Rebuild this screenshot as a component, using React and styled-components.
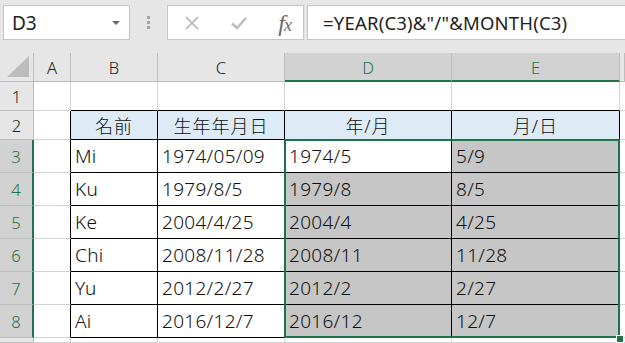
import React from "react";
import styled, { createGlobalStyle } from "styled-components";

const GREEN = "#217346";
const COLS = [34, 37, 87, 127, 167, 168, 5];
const ROWS = [29, 29, 29, 33, 33, 33, 33, 33, 33, 5];
const LETTERS = ["A", "B", "C", "D", "E", ""];

const data = [
  ["Mi", "1974/05/09", "1974/5", "5/9"],
  ["Ku", "1979/8/5", "1979/8", "8/5"],
  ["Ke", "2004/4/25", "2004/4", "4/25"],
  ["Chi", "2008/11/28", "2008/11", "11/28"],
  ["Yu", "2012/2/27", "2012/2", "2/27"],
  ["Ai", "2016/12/7", "2016/12", "12/7"],
];

const App = () => {
  const rows = [];
  // row 1: empty, bottom of B..E is the table's top border
  rows.push(
    <React.Fragment key="r1">
      <RowHead>1</RowHead>
      <Cell />
      <Cell $bottom />
      <Cell $bottom />
      <Cell $bottom />
      <Cell $bottom />
      <Cell />
    </React.Fragment>
  );
  rows.push(
    <React.Fragment key="r2">
      <RowHead>2</RowHead>
      <Cell $right />
      <Cell $table $head>名前</Cell>
      <Cell $table $head>生年年月日</Cell>
      <Cell $table $head>年/月</Cell>
      <Cell $table $head>月/日</Cell>
      <Cell />
    </React.Fragment>
  );
  data.forEach((r, i) => {
    rows.push(
      <React.Fragment key={"d" + i}>
        <RowHead $active>{i + 3}</RowHead>
        <Cell $right />
        <Cell $table>{r[0]}</Cell>
        <Cell $table>{r[1]}</Cell>
        <Cell $table $selected={i !== 0}>{r[2]}</Cell>
        <Cell $table $selected>{r[3]}</Cell>
        <Cell />
      </React.Fragment>
    );
  });
  rows.push(
    <React.Fragment key="r9">
      <RowHead />
      <Cell />
      <Cell />
      <Cell />
      <Cell />
      <Cell />
      <Cell />
    </React.Fragment>
  );

  return (
    <>
      <GlobalStyle />
      <Toolbar>
        <NameBox>
          <span>D3</span>
          <Caret />
        </NameBox>
        <Grip>
          <i />
          <i />
          <i />
        </Grip>
        <FuncBox>
          <svg width="16" height="16" viewBox="0 0 16 16">
            <path d="M2 2L14 14M14 2L2 14" stroke="#b4b4b4" strokeWidth="1.6" fill="none" />
          </svg>
          <svg width="18" height="16" viewBox="0 0 18 16">
            <path d="M2 8.5L7 13L16 3" stroke="#bcbcbc" strokeWidth="2.6" fill="none" />
          </svg>
          <Fx>
            f<sub>x</sub>
          </Fx>
        </FuncBox>
        <FormulaBox>=YEAR(C3)&amp;"/"&amp;MONTH(C3)</FormulaBox>
      </Toolbar>
      <Sheet>
        <Grid>
          <Corner>
            <Triangle />
          </Corner>
          {LETTERS.map((l, i) => (
            <ColHead key={i} $active={i === 3 || i === 4}>
              {l}
            </ColHead>
          ))}
          {rows}
        </Grid>
        <Selection />
        <Handle />
      </Sheet>
    </>
  );
};

export default App;

const GlobalStyle = createGlobalStyle`
  html, body {
    margin: 0;
    padding: 0;
    background: #e6e6e6;
    overflow: hidden;
  }
  body {
    font-family: "Noto Sans", "Noto Sans CJK JP", sans-serif;
  }
`;

const Toolbar = styled.div`
  display: flex;
  align-items: center;
  height: 53px;
  padding: 0 0 8px 3px;
  box-sizing: border-box;
  background: #e6e6e6;
`;

const Box = styled.div`
  height: 35px;
  box-sizing: border-box;
  background: #fff;
  border: 1px solid #c6c6c6;
  display: flex;
  align-items: center;
`;

const NameBox = styled(Box)`
  width: 127px;
  padding: 0 8px 0 8px;
  justify-content: space-between;
  font-size: 19px;
  color: #222;
`;

const Caret = styled.div`
  width: 0;
  height: 0;
  border-left: 4px solid transparent;
  border-right: 4px solid transparent;
  border-top: 4px solid #6b6b6b;
  margin-right: 1px;
`;

const Grip = styled.div`
  width: 37px;
  display: flex;
  flex-direction: column;
  align-items: center;
  gap: 2px;
  i {
    width: 3px;
    height: 3px;
    background: #a6a6a6;
  }
`;

const FuncBox = styled(Box)`
  width: 137px;
  padding: 0 12px 0 16px;
  justify-content: space-between;
`;

const Fx = styled.span`
  font-family: "Liberation Serif", serif;
  font-style: italic;
  font-size: 24px;
  color: #6a6a6a;
  letter-spacing: -1px;
  line-height: 1;
  sub {
    font-size: 18px;
    vertical-align: 0;
  }
`;

const FormulaBox = styled(Box)`
  flex: 1;
  margin-left: 3px;
  border-right: none;
  padding-left: 15px;
  font-size: 18.5px;
  letter-spacing: 0.2px;
  color: #222;
`;

const Sheet = styled.div`
  position: relative;
  background: #fff;
`;

const Grid = styled.div`
  display: grid;
  grid-template-columns: ${COLS.map((c) => c + "px").join(" ")};
  grid-template-rows: ${ROWS.map((r) => r + "px").join(" ")};
`;

const Corner = styled.div`
  background: #e6e6e6;
  border-right: 1px solid #bdbdbd;
  border-bottom: 1px solid #bdbdbd;
  box-sizing: border-box;
  display: flex;
  align-items: flex-end;
  justify-content: flex-end;
  padding: 0 4px 4px 0;
`;

const Triangle = styled.div`
  width: 22px;
  height: 21px;
  background: #bdbdbd;
  clip-path: polygon(100% 0, 100% 100%, 0 100%);
`;

const ColHead = styled.div`
  box-sizing: border-box;
  background: ${(p) => (p.$active ? "#d2d2d2" : "#e6e6e6")};
  color: ${(p) => (p.$active ? GREEN : "#222")};
  border-right: 1px solid #bdbdbd;
  border-bottom: ${(p) => (p.$active ? `2px solid ${GREEN}` : "1px solid #bdbdbd")};
  display: flex;
  align-items: center;
  justify-content: center;
  font-size: 16.5px;
  font-weight: 300;
  padding-top: ${(p) => (p.$active ? "1px" : "0")};
`;

const RowHead = styled.div`
  box-sizing: border-box;
  background: ${(p) => (p.$active ? "#d2d2d2" : "#e6e6e6")};
  color: ${(p) => (p.$active ? GREEN : "#222")};
  border-right: ${(p) => (p.$active ? `2px solid ${GREEN}` : "1px solid #bdbdbd")};
  border-bottom: 1px solid #bdbdbd;
  display: flex;
  align-items: center;
  justify-content: center;
  font-size: 16.5px;
  font-weight: 300;
`;

const Cell = styled.div`
  box-sizing: border-box;
  background: ${(p) => (p.$selected ? "#c6c6c6" : p.$head ? "#ddebf7" : "#fff")};
  border-right: 1px solid ${(p) => (p.$table || p.$right ? "#000" : "#d4d4d4")};
  border-bottom: 1px solid ${(p) => (p.$table || p.$bottom ? "#000" : "#d4d4d4")};
  display: flex;
  align-items: center;
  justify-content: ${(p) => (p.$head ? "center" : "flex-start")};
  padding: 0 4px;
  font-size: ${(p) => (p.$head ? "18px" : "19px")};
  font-weight: 300;
  letter-spacing: ${(p) => (p.$head ? "1px" : "0.3px")};
  color: #111;
  white-space: nowrap;
  overflow: hidden;
`;

const Selection = styled.div`
  position: absolute;
  left: 284px;
  top: 86px;
  width: 336px;
  height: 199px;
  box-sizing: border-box;
  border: 2px solid ${GREEN};
  pointer-events: none;
`;

const Handle = styled.div`
  position: absolute;
  left: 616px;
  top: 282px;
  width: 6px;
  height: 6px;
  background: ${GREEN};
  border: 1px solid #fff;
`;
